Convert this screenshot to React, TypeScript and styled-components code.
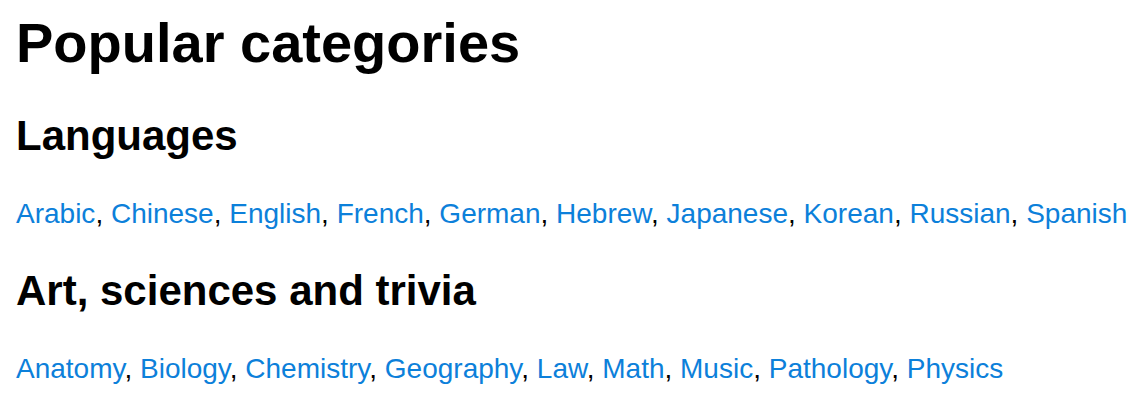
import * as React from 'react';
import styled, { createGlobalStyle } from 'styled-components';

const GlobalStyle = createGlobalStyle`
  body {
    margin: 0;
    background: #fff;
    font-family: "Liberation Sans", Arial, Helvetica, sans-serif;
    color: #000;
  }
`;

const Page = styled.main`
  display: flex;
  flex-direction: column;
  padding: 11px 16px 0;
`;

const Title = styled.h1`
  margin: 0 0 37px;
  font-size: 56px;
  line-height: 64px;
  font-weight: bold;
`;

const Section = styled.section`
  display: flex;
  flex-direction: column;
  gap: 38px;
  margin-bottom: 37px;
`;

const Heading = styled.h2`
  margin: 0;
  font-size: 42px;
  line-height: 48px;
  font-weight: bold;
`;

const LinkList = styled.p`
  margin: 0;
  font-size: 28px;
  line-height: 32px;
`;

const CategoryLink = styled.a`
  color: #0c80da;
  text-decoration: none;
`;

const categories = [
  {
    title: 'Languages',
    items: ['Arabic', 'Chinese', 'English', 'French', 'German', 'Hebrew', 'Japanese', 'Korean', 'Russian', 'Spanish'],
  },
  {
    title: 'Art, sciences and trivia',
    items: ['Anatomy', 'Biology', 'Chemistry', 'Geography', 'Law', 'Math', 'Music', 'Pathology', 'Physics'],
  },
];

export default function App() {
  return (
    <Page>
      <GlobalStyle />
      <Title>Popular categories</Title>
      {categories.map(group => (
        <Section key={group.title}>
          <Heading>{group.title}</Heading>
          <LinkList>
            {group.items.map((item, i) => (
              <React.Fragment key={item}>
                <CategoryLink href="#">{item}</CategoryLink>
                {i < group.items.length - 1 && ', '}
              </React.Fragment>
            ))}
          </LinkList>
        </Section>
      ))}
    </Page>
  );
}
